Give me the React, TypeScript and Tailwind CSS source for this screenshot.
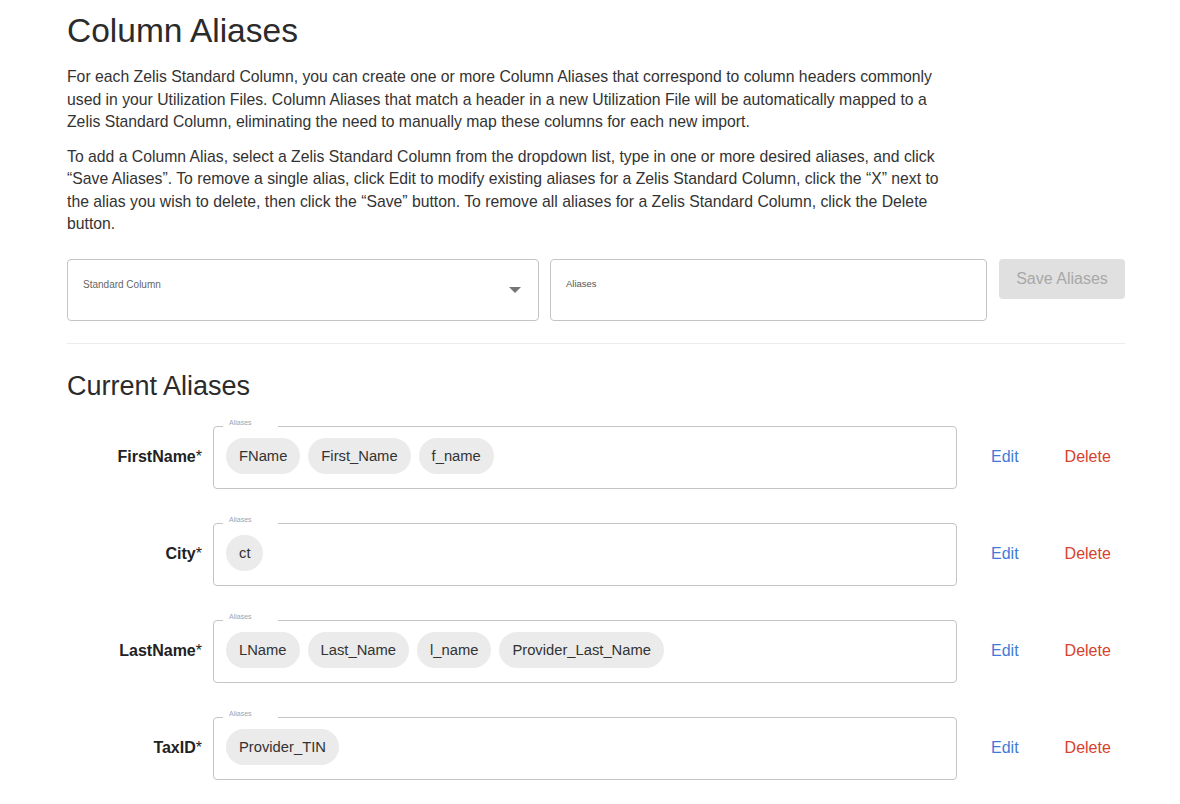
const rows = [
  { name: 'FirstName', aliases: ['FName', 'First_Name', 'f_name'] },
  { name: 'City', aliases: ['ct'] },
  { name: 'LastName', aliases: ['LName', 'Last_Name', 'l_name', 'Provider_Last_Name'] },
  { name: 'TaxID', aliases: ['Provider_TIN'] },
];

const App = () => {
  return (
    <div className="min-h-screen bg-white font-['Liberation_Sans',Arial,sans-serif] text-[#333]">
      <div className="w-[1058px] ml-[67px] pt-[12px]">
        <h1 className="text-[33.5px] leading-[38px] text-[#2b2b2b]">Column Aliases</h1>

        <p className="mt-[16px] w-[880px] text-[15.75px] leading-[22.5px]">
          For each Zelis Standard Column, you can create one or more Column Aliases that correspond to column headers commonly
          used in your Utilization Files. Column Aliases that match a header in a new Utilization File will be automatically mapped to a
          Zelis Standard Column, eliminating the need to manually map these columns for each new import.
        </p>
        <p className="mt-[12px] w-[880px] text-[15.75px] leading-[22.5px]">
          To add a Column Alias, select a Zelis Standard Column from the dropdown list, type in one or more desired aliases, and click
          “Save Aliases”. To remove a single alias, click Edit to modify existing aliases for a Zelis Standard Column, click the “X” next to
          the alias you wish to delete, then click the “Save” button. To remove all aliases for a Zelis Standard Column, click the Delete
          button.
        </p>

        {/* Add alias form */}
        <div className="mt-[23px] flex items-start">
          <div className="relative h-[62px] w-[472px] rounded-[4px] border border-[#c4c4c4]">
            <span className="absolute left-[15px] top-[17px] text-[10px] text-[#666]">Standard Column</span>
            <svg className="absolute left-[441px] top-[27px]" width="12" height="6" viewBox="0 0 12 6">
              <path d="M0 0 L12 0 L6 6 Z" fill="#757575" />
            </svg>
          </div>
          <div className="relative ml-[11px] h-[62px] w-[437px] rounded-[4px] border border-[#c4c4c4]">
            <span className="absolute left-[15px] top-[17px] text-[9.5px] text-[#555]">Aliases</span>
          </div>
          <button className="ml-[12px] h-[40px] w-[126px] rounded-[4px] bg-[#e0e0e0] text-[16px] text-[#a8a8a8]">
            Save Aliases
          </button>
        </div>

        <div className="mt-[22px] h-px w-full bg-[#ececec]" />

        <h2 className="mt-[27px] text-[27px] leading-[30px] text-[#2b2b2b]">Current Aliases</h2>

        <div className="mt-[25px] flex flex-col gap-[34px]">
          {rows.map((row) => (
            <div key={row.name} className="flex items-center">
              <div className="w-[135px] text-right text-[16px] text-[#222]">
                <span className="font-bold">{row.name}</span>*
              </div>
              <div className="relative ml-[11px] flex h-[63px] w-[744px] items-center gap-[8px] rounded-[4px] border border-[#c4c4c4] px-[12px] pb-[2px]">
                <span className="absolute left-[9px] top-[-10px] w-[55px] bg-white pl-[6px] text-[7px] leading-[12px] text-[#9aa3b3]">
                  Aliases
                </span>
                <span className="absolute left-[9px] top-[-2px] h-[4px] w-[55px] bg-white" />
                {row.aliases.map((a) => (
                  <span key={a} className="flex h-[36px] items-center rounded-full bg-[#ebebeb] px-[13px] text-[14.75px] text-[#333]">
                    {a}
                  </span>
                ))}
              </div>
              <button className="ml-[34px] text-[16px] text-[#3f7bd6]">Edit</button>
              <button className="ml-[46px] text-[16px] text-[#d6422e]">Delete</button>
            </div>
          ))}
        </div>
      </div>
    </div>
  );
};

export default App;
